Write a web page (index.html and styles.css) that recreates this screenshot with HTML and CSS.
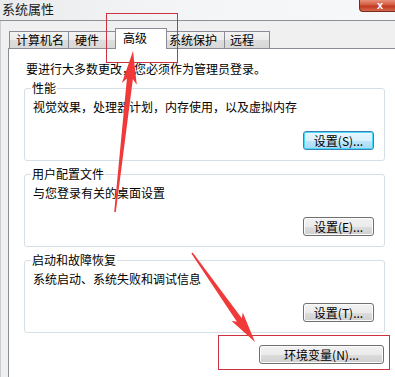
FILE: index.html
```html
<!DOCTYPE html>
<html lang="zh-CN">
<head>
<meta charset="utf-8">
<title>系统属性</title>
<link rel="stylesheet" href="styles.css">
</head>
<body>
<div class="window">
  <div class="titlebar">
    <span class="title">系统属性</span>
    <span class="close">x</span>
  </div>
  <div class="client">
    <div class="tabs">
      <div class="tab t1">计算机名</div>
      <div class="tab t2">硬件</div>
      <div class="tab t3 selected">高级</div>
      <div class="tab t4">系统保护</div>
      <div class="tab t5">远程</div>
    </div>
    <div class="panel">
      <p class="note">要进行大多数更改，您必须作为管理员登录。</p>
      <fieldset class="group">
        <legend>性能</legend>
        <p class="desc">视觉效果，处理器计划，内存使用，以及虚拟内存</p>
        <div class="btnrow"><button class="btn focused">设置(S)...</button></div>
      </fieldset>
      <fieldset class="group">
        <legend>用户配置文件</legend>
        <p class="desc">与您登录有关的桌面设置</p>
        <div class="btnrow"><button class="btn">设置(E)...</button></div>
      </fieldset>
      <fieldset class="group">
        <legend>启动和故障恢复</legend>
        <p class="desc">系统启动、系统失败和调试信息</p>
        <div class="btnrow"><button class="btn">设置(T)...</button></div>
      </fieldset>
      <div class="btnrow envrow"><button class="btn wide">环境变量(N)...</button></div>
    </div>
  </div>
  <svg class="marks" width="395" height="377" viewBox="0 0 395 377">
    <rect class="box" x="106.5" y="13.5" width="71" height="49"/>
    <rect class="box" x="218.5" y="335.5" width="171" height="34"/>
    <g transform="translate(115 212) rotate(-83.62)">
      <polygon class="arrow" points="0,-0.8 134,-3 129,-7.5 162,0 129,7.5 134,3 0,0.8"/>
    </g>
    <g transform="translate(192 253) rotate(54.7)">
      <polygon class="arrow" points="0,-0.8 82,-3 78,-7 109,0 78,7 82,3 0,0.8"/>
    </g>
  </svg>
</div>
</body>
</html>
```

FILE: styles.css
```css
* { box-sizing: border-box; }

html, body {
  margin: 0;
  padding: 0;
  width: 395px;
  height: 377px;
  overflow: hidden;
  background: #ffffff;
}

body {
  font-family: "Noto Sans CJK SC", "Noto Sans", sans-serif;
  font-size: 12px;
  color: #000;
}

.window {
  position: relative;
  width: 395px;
  height: 377px;
  overflow: hidden;
}

.titlebar {
  height: 21px;
  display: flex;
  align-items: flex-start;
  background: linear-gradient(90deg, #e9ebed 0%, #f4f5f6 45%, #f7f8f9 100%);
  border-bottom: 1px solid #8e9296;
}

.title {
  font-size: 13px;
  line-height: 18px;
  padding-left: 2px;
  color: #1a1a1a;
}

.close {
  margin-left: auto;
  width: 36px;
  height: 12px;
  background: linear-gradient(#e7917d 0%, #d5593f 45%, #c0381f 55%, #d5694e 100%);
  border: 1px solid #7a2a1c;
  border-top: none;
  border-right: none;
  border-radius: 0 0 0 4px;
  color: #fff;
  font-family: "Liberation Sans", sans-serif;
  font-weight: bold;
  font-size: 11px;
  line-height: 11px;
  padding-left: 17px;
}

.client {
  background: #f0f0f0;
  padding-left: 7px;
  height: 356px;
  border-left: 1px solid #c9ccd0;
}

.tabs {
  height: 27px;
  display: flex;
  align-items: flex-end;
  padding-left: 1px;
}

.tab {
  height: 17px;
  line-height: 16px;
  border: 1px solid #898c95;
  border-bottom: none;
  margin-right: -1px;
  background: linear-gradient(#f3f3f3 0%, #ebebeb 50%, #dddddd 51%, #d8d8d8 100%);
  white-space: nowrap;
  position: relative;
}

.t1 { width: 60px; padding-left: 6px; }
.t2 { width: 50px; padding-left: 6px; }
.t3 { width: 49px; padding-left: 5px; }
.t4 { width: 61px; padding-left: 4px; }
.t5 { width: 46px; padding-left: 5px; }

.tab.selected {
  height: 21px;
  line-height: 18px;
  width: 52px;
  margin-left: -2px;
  margin-right: -3px;
  margin-bottom: -1px;
  padding-left: 7px;
  background: #ffffff;
  z-index: 2;
}

.panel {
  background: #ffffff;
  border-top: 1px solid #898c95;
  border-left: 1px solid #898c95;
  height: 329px;
  padding: 0 0 0 15px;
}

.note {
  margin: 13px 0 0 2px;
  line-height: 14px;
  height: 14px;
}

.group {
  width: 361px;
  margin: 6px 0 0 0;
  padding: 0 10px 10px 8px;
  border: 1px solid #d5dfe5;
  border-radius: 3px;
}

.group + .group { margin-top: 6px; }

.note + .group { margin-top: 5px; }

.group legend {
  padding: 0 1px;
  margin-left: -2px;
  line-height: 14px;
  height: 14px;
}

.desc {
  margin: 5px 0 0 0;
  line-height: 14px;
  height: 14px;
}

.btnrow {
  display: flex;
  justify-content: flex-end;
  margin-top: 17px;
}

.btn {
  width: 71px;
  height: 19px;
  padding: 0;
  font-family: "Noto Sans CJK SC", "Noto Sans", sans-serif;
  font-size: 12px;
  line-height: 16px;
  color: #000;
  border: 1px solid #707070;
  border-radius: 3px;
  background: linear-gradient(#f2f2f2 0%, #ebebeb 50%, #dddddd 51%, #cfcfcf 100%);
  box-shadow: inset 0 0 0 1px #fbfbfb;
}

.btn.focused {
  border-color: #3c7fb1;
  background: linear-gradient(#eaf6fd 0%, #d9f0fc 50%, #bee6fd 51%, #a7d9f5 100%);
  box-shadow: inset 0 0 0 1px #48d8fb;
}

.btn.wide { width: 125px; }

.envrow {
  width: 361px;
  margin-top: 12px;
  padding-right: 1px;
}

.marks {
  position: absolute;
  left: 0;
  top: 0;
  pointer-events: none;
}

.marks .box {
  fill: none;
  stroke: #cc3340;
  stroke-width: 1;
}

.marks .arrow {
  fill: #f03a3a;
}
```
